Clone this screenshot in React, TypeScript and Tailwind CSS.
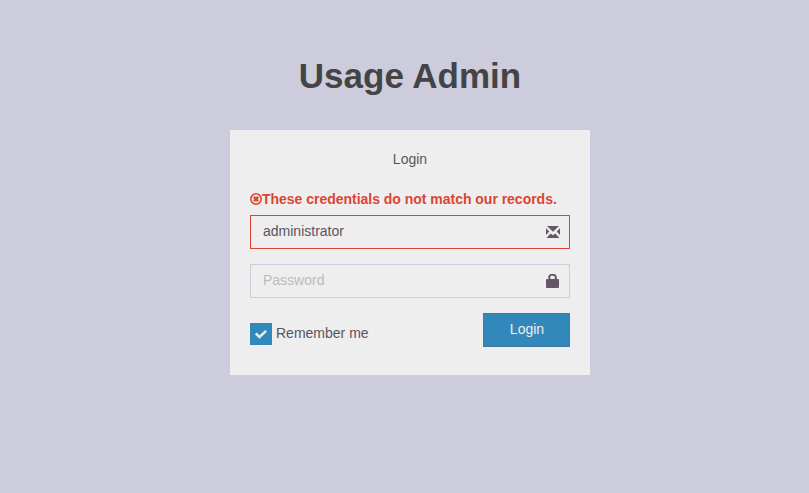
import React from "react";

function TimesCircleIcon() {
  return (
    <svg className="h-3 w-3 shrink-0" viewBox="0 0 12 12" fill="none" stroke="currentColor">
      <circle cx="6" cy="6" r="5.2" strokeWidth="1.6" />
      <path d="M3.9 3.9l4.2 4.2M8.1 3.9L3.9 8.1" strokeWidth="2.5" />
    </svg>
  );
}

function EnvelopeIcon() {
  return (
    <svg className="mr-[9px] h-3 w-3.5 shrink-0 text-[#665566]" viewBox="0 0 14 12" fill="currentColor">
      <path d="M1 0h12L7 5.8z" />
      <path d="M0 2.2L3.3 5.6 0 9zM14 2.2V9L10.7 5.6z" />
      <path d="M.6 12L4.6 7.4 7 9.2l2.4-1.8 4 4.6z" />
    </svg>
  );
}

function LockIcon() {
  return (
    <svg className="mr-2.5 h-3.5 w-[13px] shrink-0 text-[#665566]" viewBox="0 0 13 14" fill="currentColor">
      <path d="M0 6q0-1 1-1h1.3V2.6Q2.6 0 5 0h3q2.4 0 2.7 2.6V5H12q1 0 1 1v7q0 1-1 1H1q-1 0-1-1zM4.3 5h4.4V3Q8.6 1.7 7.5 1.7h-2Q4.4 1.7 4.3 3z" fillRule="evenodd" />
    </svg>
  );
}

export default function App() {
  return (
    <div className="flex h-[493px] w-full justify-center bg-[#ccccdd] pl-[11px] pt-[51px] font-['Liberation_Sans',Arial,sans-serif] text-sm leading-5 text-[#5c5360]">
      <div className="w-[360px]">
        <h1 className="mb-[29px] text-center text-[35px] font-bold leading-[50px] text-[#444]">
          <span className="inline-block whitespace-nowrap">Usage Admin</span>
        </h1>
        <form className="h-[245px] bg-[#eee] px-5 pt-[19px]" onSubmit={(e) => e.preventDefault()}>
          <p className="text-center">Login</p>
          <div className="mt-5 flex h-5 items-center whitespace-nowrap font-bold text-[#dd4433]">
            <TimesCircleIcon />
            <span className="tracking-[-0.02px]">These credentials do not match our records.</span>
          </div>
          <div className="mt-1.5 mb-[15px] flex h-[34px] items-center border border-[#dd4433] pl-3">
            <input className="min-w-0 flex-1 bg-transparent pb-0.5 outline-none" defaultValue="administrator" aria-label="Username" />
            <EnvelopeIcon />
          </div>
          <div className="flex h-[34px] items-center border border-[#ccccdd] pl-3">
            <input className="min-w-0 flex-1 bg-transparent pb-0.5 outline-none placeholder:text-[#bbb]" placeholder="Password" type="password" />
            <LockIcon />
          </div>
          <div className="mt-[15px] flex items-start justify-between">
            <label className="mt-2.5 flex h-[22px] items-center gap-1">
              <span className="flex h-[22px] w-[22px] items-center justify-center bg-[#3388bb]">
                <svg className="h-3 w-3" viewBox="0 0 12 12" fill="none" stroke="#eee" strokeWidth="2.5">
                  <path d="M.8 5.5l3.7 3.5 6.7-6.1" />
                </svg>
              </span>
              <span className="pb-0.5">Remember me</span>
            </label>
            <button className="h-[34px] w-[87px] border border-[#4679a0] bg-[#3388bb] pb-0.5 pl-px text-[#eee]">Login</button>
          </div>
        </form>
      </div>
    </div>
  );
}
